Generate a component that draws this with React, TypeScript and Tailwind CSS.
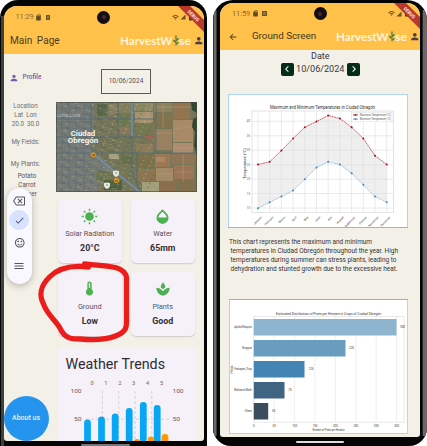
import React from "react";
import { MdPerson, MdSpa, MdDeviceThermostat, MdOutlineBackspace, MdCheck, MdMenu, MdArrowBack, MdChevronLeft, MdChevronRight, MdWifi, MdSignalCellular4Bar, MdSdCard, MdSentimentSatisfiedAlt, MdBatteryFull } from "react-icons/md";

type LabelProps = {
  x: number;
  y: number;
  s: number;
  w?: number;
  fill?: string;
  anchor?: "start" | "middle" | "end";
  bold?: boolean;
  children: string;
};

function Label({ x, y, s, w, fill = "#333", anchor = "start", bold, children }: LabelProps) {
  return (
    <text x={x} y={y} fontSize={s} fill={fill} textAnchor={anchor} fontWeight={bold ? 700 : 400} textLength={w} lengthAdjust="spacingAndGlyphs">
      {children}
    </text>
  );
}

function Brand() {
  return (
    <svg width="86" height="16" viewBox="0 0 86 16" className="shrink-0 font-['Lato',sans-serif]">
      <Label x={2} y={12} s={11.3} w={52.5} fill="#fff4dd" bold>HarvestW</Label>
      <Label x={61} y={12} s={11.3} w={12} fill="#fff4dd" bold>se</Label>
      <path d="M58 12.5V4.5" stroke="#397846" strokeWidth="1" />
      <path d="M57.9 9.4c-1.8 0-2.8-1-2.9-2.6 1.8 0 2.9.9 2.9 2.6ZM58.1 7.8c0-1.7.9-2.6 2.5-2.8 0 1.7-.8 2.8-2.5 2.8ZM58 5.4c-.9-1.2-.9-2.4 0-3.4.9 1 .9 2.2 0 3.4ZM58.1 11.4c0-1.5.9-2.4 2.4-2.5 0 1.6-.9 2.5-2.4 2.5Z" fill="#397846" />
      <MdPerson x={75.3} y={2.2} size={11} color="#45404a" />
    </svg>
  );
}

function SunIcon() {
  return (
    <svg width="17" height="17" viewBox="0 0 17 17" fill="none">
      <circle cx="8.5" cy="8.5" r="4.3" fill="currentColor" />
      <path d="M8.5 .8v2M8.5 14.2v2M.8 8.5h2M14.2 8.5h2M3 3l1.4 1.4M12.6 12.6 14 14M3 14l1.4-1.4M12.6 4.4 14 3" stroke="currentColor" strokeWidth="1.4" />
    </svg>
  );
}

function DropIcon() {
  return (
    <svg width="15" height="17" viewBox="0 0 15 17">
      <path d="M7.5 1.2 11.7 5.6a6 6 0 1 1-8.4 0Z" fill="currentColor" />
      <path d="M3.4 9.4C3.5 7.8 4.2 6.9 7.5 3.7c3.3 3.2 4 4.1 4.1 5.7Z" fill="#f6f1f8" />
    </svg>
  );
}

function StatusBar({ time, className }: { time: string; className: string }) {
  return (
    <div className={"flex items-center text-[#8b6a31] " + className}>
      <span className="text-[7.3px] leading-none">{time}</span>
      <MdSdCard size={7} className="ml-[1.5px] text-[#5f4a25]" />
      <span className="ml-[3.5px] h-[5px] w-[4.5px] border border-[#6d552b] bg-[#94743a]" />
      <span className="ml-[47px] flex h-[13px] w-[13px] shrink-0 items-center justify-center rounded-full bg-[#120e12]">
        <span className="h-[4px] w-[4px] rounded-full bg-[#4d2631]" />
      </span>
      <MdWifi size={7} className="ml-[61.5px] shrink-0 text-[#4f3e20]" />
      <MdSignalCellular4Bar size={6} className="ml-[1px] shrink-0 text-[#6c5223]" />
      <MdBatteryFull size={7} className="ml-[1px] shrink-0 text-[#3f3118]" />
    </div>
  );
}

function DebugRibbon() {
  return (
    <svg width="27" height="27" viewBox="0 0 27 27" className="absolute right-0 top-0">
      <path d="M1 0H13L27 14V26Z" fill="#b9372b" />
      <g transform="translate(16.5 9.8) rotate(45)">
        <Label x={0} y={1.7} s={4.8} w={14} fill="#f7e3dc" anchor="middle" bold>DEBUG</Label>
      </g>
    </svg>
  );
}

const fields = [
  [98, 0, 18, 10, "#8d8260"], [117, 0, 17, 17, "#927550"], [98, 11, 18, 15, "#80734f"], [117, 18, 20, 22, "#a98a68"],
  [99, 27, 17, 21, "#9b8060"], [117, 41, 20, 10, "#b08d70"], [78, 0, 19, 9, "#8b8964"], [79, 10, 18, 11, "#a79371"],
  [80, 22, 17, 9, "#757952"], [80, 42, 17, 9, "#8e7d59"], [80, 53, 18, 13, "#7c7049"], [99, 52, 15, 13, "#9b7854"],
  [115, 52, 24, 10, "#8f7656"], [82, 67, 17, 12, "#8c7653"], [100, 66, 17, 13, "#a38b68"], [118, 63, 20, 14, "#9b7658"],
  [86, 80, 17, 10, "#a2a07b"], [104, 80, 16, 10, "#8d6e4f"], [121, 78, 18, 12, "#81714c"],
  [63, 1, 14, 10, "#837e5e"], [64, 13, 10, 10, "#6d784e"], [53, 2, 8, 10, "#8d8266"], [41, 2, 10, 12, "#5c6a49"],
  [52, 14, 10, 8, "#777155"], [64, 25, 10, 7, "#8b795b"], [53, 52, 10, 5, "#a3a180"], [66, 54, 11, 8, "#657048"],
  [40, 69, 14, 10, "#6d7751"], [48, 78, 18, 10, "#526340"], [100, 55, 9, 5, "#ac8765"],
] as const;

function SatelliteMap() {
  const roofs = Array.from({ length: 680 }, (_, i) => {
    const x = (i * 37.17) % 62;
    const y = (i * 23.71) % 90;
    return <rect key={i} x={x} y={y} width={1.5} height={1} fill={["#bab9aa", "#4b544e", "#969785", "#677064"][i % 4]} opacity=".42" />;
  });
  const trees = Array.from({ length: 170 }, (_, i) => (
    <rect key={i} x={42 + ((i * 17.73) % 55)} y={(i * 31.37) % 90} width={1.6} height={1.2} fill={["#a9a889", "#465c3c", "#c4ba9c"][i % 3]} opacity=".5" />
  ));
  return (
    <svg width="141" height="90" viewBox="0 0 141 90" className="block shrink-0">
      <rect width="141" height="90" fill="#767658" />
      <path d="M0 0H38V51L56 65L40 90H0Z" fill="#777c75" />
      {fields.map(([x, y, w, h, c], i) => <rect key={i} x={x} y={y} width={w} height={h} fill={c} />)}
      <path d="M99 5H136M99 31H117M117 27L140 24M82 15H97M118 46H138M101 72H117M119 70H137M107 0V25M127 52V80M90 0V13" stroke="#bca17b" strokeWidth=".7" opacity=".7" />
      {roofs}
      {trees}
      <path d="M135 0h6v11l-5-3ZM137 17l4-2v38l-3-9 1-14-3-5Z" fill="#33482e" />
      <path d="M0 6H38M0 12H37M0 20H38M0 26H40M0 41H35M0 46H38M0 58H38M0 65H38M0 73H37M0 81H38M6 0V90M13 0V90M20 0V90M28 0V90M45 0V51" stroke="#526783" strokeWidth=".6" opacity=".8" />
      <path d="M0 17H100V0M0 35H88M0 51H140M76 0V70L84 90M100 17V51M35 0V42L37 53M81 50V83M62 0V36" fill="none" stroke="#536b78" strokeWidth=".9" />
      <path d="M37 52L84 90M76 0V34" stroke="#6f88a1" strokeWidth="2" />
      <path d="M37 52L84 90" stroke="#8798a2" strokeWidth=".6" />
      <path d="M90 35h7M93.5 31v8" stroke="#b55a50" strokeWidth="1.6" />
      <Label x={1} y={15} s={4.5} w={23} fill="#b6bac0">Loma Linda</Label>
      <Label x={27} y={33.5} s={6.6} w={24.5} fill="#f4f4f4" anchor="middle" bold>Ciudad</Label>
      <Label x={27} y={41} s={6.6} w={30.5} fill="#f4f4f4" anchor="middle" bold>Obregón</Label>
      <circle cx="37.3" cy="52.8" r="2.5" fill="#dc941f" /><path d="M36 53h3" stroke="#5b461d" />
      <circle cx="60.5" cy="78.5" r="2.5" fill="#e29b22" /><path d="M59 79h3" stroke="#5b461d" />
      <path d="M57 69q3-1 6 0v3q-1 3-3 3t-3-3ZM48 81q3-1 6 0v3q-1 3-3 3t-3-3Z" fill="#e5e6df" />
      <path d="M59 71h2M50 83h2" stroke="#8b8d88" />
      <path d="M0 .5H141M0 89.5H141M140.5 0V90M.5 0V90" stroke="#454e47" opacity=".65" />
    </svg>
  );
}

function Card({ icon, label, value }: { icon: React.ReactNode; label: string; value: string }) {
  return (
    <div className="flex h-[64px] w-[64.5px] flex-col items-center rounded-[5px] bg-[#f6f1f8] pt-[8px] shadow-[0_1px_1.5px_#cfc9cc]">
      <div className="flex h-[18px] items-center text-[#4caf50]">{icon}</div>
      <div className="mt-[4px] whitespace-nowrap text-[7.3px] leading-[10px] text-[#57525b]">{label}</div>
      <div className="mt-[3px] text-[8.8px] font-bold leading-[12px] text-[#333038]">{value}</div>
    </div>
  );
}

function WeatherTrends() {
  const blue = [[29.5, 71.5], [43.5, 68.5], [57.2, 65.5], [71.2, 60], [85.3, 54], [99.2, 57]];
  return (
    <svg width="138" height="94" viewBox="0 0 138 94" className="mt-[12px] block rounded-t-[5px] bg-[#f6f1f8]">
      <Label x={7.5} y={20.5} s={14} w={99.5} fill="#2f2c32">Weather Trends</Label>
      {["0", "1", "2", "3", "4", "5"].map((d, i) => <Label key={d} x={34 + i * 13.9} y={36.5} s={5.7} anchor="middle" fill="#69646d">{d}</Label>)}
      <Label x={12.5} y={45} s={6} w={11} fill="#625e66">100</Label>
      <Label x={114.5} y={45} s={6} w={11} fill="#625e66">100</Label>
      <path d="M44.4 43V94M60.8 43V94M77 43V94M93.8 43V94M28 71.2H111" stroke="#c9c7cd" strokeWidth=".8" strokeDasharray="3 2" />
      <Label x={16} y={73.2} s={6} w={7.5} fill="#625e66">50</Label>
      <Label x={114.5} y={73.2} s={6} w={7.5} fill="#625e66">50</Label>
      {blue.map(([x, y]) => <rect key={x} x={x - 3.4} y={y} width={6.8} height={40} rx={3.4} fill="#07a7f3" />)}
      {[[65, 93], [79, 91], [93, 88.5], [107, 86]].map(([x, y]) => <rect key={x} x={x - 3.4} y={y} width={6.8} height={20} rx={3.4} fill="#ff9803" />)}
    </svg>
  );
}

function MainPhone() {
  return (
    <div className="relative h-[446px] w-[206.5px] shrink-0 rounded-t-[18px] bg-[#050505] pl-[3.5px] pt-[6px]">
      <div className="absolute bottom-0 left-[1px] top-[16px] w-[2.5px] bg-[#3c433f]" />
      <div className="relative h-[435px] w-[200.5px] overflow-hidden rounded-b-[3px] rounded-t-[13px] bg-[#f3f0e8]">
        <header className="h-[47.5px] bg-[#ffc14a]">
          <StatusBar time="11:29" className="h-[22px] pl-[12px]" />
          <div className="flex h-[25px] items-center justify-between pl-[6.5px]">
            <h1 className="whitespace-nowrap text-[10.1px] text-[#4b3c22] [word-spacing:2px]">Main Page</h1>
            <Brand />
          </div>
          <DebugRibbon />
        </header>
        <div className="flex">
          <aside className="flex w-[52px] shrink-0 flex-col items-center text-[6.3px] leading-[9px] text-[#706c70]">
            <div className="mt-[19px] flex items-center gap-[4px] self-start pl-[5px] text-[6.5px] font-medium text-[#7959ae]"><MdPerson size={10} />Profile</div>
            <div className="mt-[19.5px] w-full whitespace-pre pr-[8px] text-center">{"Location\nLat  Lon\n20.0  30.0"}</div>
            <div className="mt-[9px] w-full pr-[8px] text-center">My Fields:</div>
            <div className="mt-[13px] w-full pr-[8px] text-center">My Plants:</div>
            <div className="mt-[3px] w-full whitespace-pre pr-[5px] text-center text-[#575357]">{"Potato\nCarrot\nPepper"}</div>
          </aside>
          <main className="w-[141px] shrink-0">
            <div className="ml-[45.5px] mt-[15.5px] flex h-[25px] w-[50px] items-center justify-center border border-[#5c5956] text-[6.5px] text-[#555155]">10/06/2024</div>
            <div className="mt-[8px]"><SatelliteMap /></div>
            <div className="ml-[2px] mt-[7px]">
              <div className="grid grid-cols-[64.5px_64.5px] gap-x-[8.5px] gap-y-[8.5px]">
                <Card icon={<SunIcon />} label="Solar Radiation" value="20°C" />
                <Card icon={<DropIcon />} label="Water" value="65mm" />
                <Card icon={<MdDeviceThermostat size={17} />} label="Ground" value="Low" />
                <Card icon={<MdSpa size={16} />} label="Plants" value="Good" />
              </div>
              <WeatherTrends />
            </div>
          </main>
        </div>
        <div className="absolute left-[3px] top-[182px] flex h-[96px] w-[25.5px] flex-col items-center rounded-full bg-[#f9f8fe] pt-[6px] text-[#55545d] shadow-[0_2px_7px_#b9b5ac]">
          <div className="flex h-[14px] items-center"><MdOutlineBackspace size={12} /></div>
          <div className="mt-[2px] flex h-[20px] w-[20px] items-center justify-center rounded-full bg-[#d8e1fd] text-[#485780]"><MdCheck size={11} /></div>
          <div className="mt-[5px] flex h-[16px] items-center"><MdSentimentSatisfiedAlt size={11.5} /></div>
          <div className="mt-[7px] flex h-[16px] items-center"><MdMenu size={12} /></div>
        </div>
        <div className="absolute left-0 top-[390px] flex h-[45px] w-[45px] items-center justify-center rounded-full bg-[#2494ef] text-[7px] font-medium text-[#e3f2ff]">About us</div>
        <svg width="200" height="435" viewBox="3.5 6 200 435" className="pointer-events-none absolute left-0 top-0">
          <path d="M88 267C72 265 58 268 49 277C40 286 38 294 43 304C47 316 57 321 61 331C65 338 70 339 80 339C92 340 105 340 115 336C128 331 126 326 126 314V278C125 266 108 266 84 264" fill="none" stroke="#ed1c1c" strokeWidth="5.3" strokeLinecap="round" strokeLinejoin="round" />
        </svg>
      </div>
      <div className="mx-auto mt-[3px] h-[2px] w-[49px] rounded-full bg-[#777]" />
    </div>
  );
}

const highs = [164, 161.3, 150, 138, 126.7, 121, 115, 118, 126.7, 138, 155.3, 164];
const lows = [207.7, 201.7, 196, 190, 178.7, 167, 161.3, 164, 172.7, 184.3, 196, 201.7];
const months = ["January", "February", "March", "April", "May", "June", "July", "August", "September", "October", "November", "December"];
const mx = (i: number) => 258 + i * 11.7;

function TemperatureChart() {
  const up = highs.map((y, i) => `${mx(i)},${y}`);
  const down = lows.map((y, i) => `${mx(i)},${y}`);
  return (
    <svg width="180" height="134" viewBox="228 93.5 180 134" className="block shrink-0 bg-white">
      <Label x={322.5} y={108.5} s={4.6} w={105} anchor="middle">Maximum and Minimum Temperatures in Ciudad Obregón</Label>
      <polygon points={[...up, ...down.slice().reverse()].join(" ")} fill="#efefef" />
      {[120.7, 135.3, 149.7, 164.3, 178.7, 193, 207.5].map((y, i) => (
        <g key={y}>
          <path d={`M252 ${y}H393.5`} stroke="#dedee0" strokeWidth=".6" />
          <Label x={250} y={y + 1} s={2.8} anchor="end" fill="#555">{String(40 - i * 5)}</Label>
        </g>
      ))}
      {months.map((m, i) => (
        <g key={m}>
          <path d={`M${mx(i)} 110.5V212`} stroke="#dedee0" strokeWidth=".6" />
          <g transform={`translate(${mx(i) + 4} 217) rotate(-45)`}><Label x={0} y={0} s={2.9} anchor="end">{m}</Label></g>
        </g>
      ))}
      <rect x="252" y="110.5" width="141.5" height="101.5" fill="none" stroke="#dcdcde" strokeWidth=".8" />
      <polyline points={up.join(" ")} fill="none" stroke="#b8575a" strokeWidth=".9" strokeDasharray="2 .6" />
      <polyline points={down.join(" ")} fill="none" stroke="#9cbfdc" strokeWidth=".9" strokeDasharray="2 .6" />
      {highs.map((y, i) => <circle key={i} cx={mx(i)} cy={y} r="1" fill="#a90d17" />)}
      {lows.map((y, i) => <circle key={i} cx={mx(i)} cy={y} r="1" fill="#4285bb" />)}
      <rect x="351.5" y="111.8" width="40.5" height="9.5" fill="#fff" stroke="#ddd" strokeWidth=".5" />
      <path d="M353 114.4h5" stroke="#a90d17" strokeWidth=".8" /><circle cx="355.5" cy="114.4" r=".9" fill="#a90d17" />
      <path d="M353 118.6h5" stroke="#4285bb" strokeWidth=".8" /><circle cx="355.5" cy="118.6" r=".9" fill="#4285bb" />
      <Label x={359.7} y={115.4} s={2.8} w={31} fill="#555">Maximum Temperature (°C)</Label>
      <Label x={359.7} y={119.6} s={2.8} w={31} fill="#555">Minimum Temperature (°C)</Label>
      <g transform="translate(245.5 163) rotate(-90)"><Label x={0} y={0} s={3.5} w={31} anchor="middle">Temperature (°C)</Label></g>
      <rect x="228.5" y="94" width="179" height="133" fill="none" stroke="#afd3f2" />
      <path d="M228 227.1H408" stroke="#7fb8e6" />
    </svg>
  );
}

const pests = [
  { name: "Aphids/Mosquito", y: 319, end: 396, value: "350", vx: 402, c: "#8fb4d0" },
  { name: "Ringspot", y: 340, end: 345, value: "225", vx: 351, c: "#699dc0" },
  { name: "Fleahoppers, Thrips", y: 361, end: 304, value: "125", vx: 310.5, c: "#4384b4" },
  { name: "Bollworm Moth", y: 382, end: 284, value: "75", vx: 289.5, c: "#406583" },
  { name: "Others", y: 403, end: 267.7, value: "35", vx: 273, c: "#3b4d5c" },
];

function PestChart() {
  return (
    <svg width="179" height="135" viewBox="228.5 299 179 135" className="block shrink-0 bg-white">
      <Label x={328} y={315} s={4} w={105} anchor="middle">Estimated Distribution of Pests per Hectare in Crops of Ciudad Obregón</Label>
      {Array.from({ length: 8 }, (_, i) => (
        <g key={i}>
          <path d={`M${253.3 + i * 20.4} 316.5V422`} stroke="#e9e9eb" strokeWidth=".7" />
          <Label x={253.3 + i * 20.4} y={426.5} s={2.8} anchor="middle">{String(i * 50)}</Label>
        </g>
      ))}
      <rect x="253.3" y="316.5" width="150.2" height="105.7" fill="none" stroke="#e4e4e6" strokeWidth=".8" />
      {pests.map((p) => (
        <g key={p.name}>
          <rect x="253.3" y={p.y} width={p.end - 253.3} height="16.5" fill={p.c} />
          <Label x={251.3} y={p.y + 8.8} s={2.8} anchor="end" w={p.name.length > 10 ? 17.5 : p.name === "Others" ? 7 : 9.5}>{p.name}</Label>
          <Label x={p.vx} y={p.y + 9} s={3} anchor="middle">{p.value}</Label>
        </g>
      ))}
      <g transform="translate(232 369.5) rotate(-90)"><Label x={0} y={0} s={2.6} w={8} anchor="middle">Pests</Label></g>
      <Label x={328} y={430.6} s={3.3} w={32} anchor="middle">Number of Pests per Hectare</Label>
      <rect x="229" y="299.5" width="178" height="134" fill="none" stroke="#b8d2f0" />
      <path d="M228.5 299.5H407.5" stroke="#82b4e6" />
    </svg>
  );
}

function GroundPhone() {
  const arrow = "flex h-[13px] w-[13px] items-center justify-center rounded-[2px] bg-[#052c19] text-white";
  return (
    <div className="relative h-[446px] w-[214px] shrink-0 overflow-hidden rounded-b-[18px] rounded-t-[20px] bg-[#050505] pl-[7px] pt-[3px]">
      <div className="absolute bottom-[10px] left-0 top-[10px] w-[4px] border-x border-[#3a3a3c] bg-[#69696b]" />
      <div className="absolute bottom-[10px] right-0 top-[10px] w-[5px] border-l border-[#242424] bg-[#68686a]" />
      <div className="relative h-[434px] w-[199.5px] overflow-hidden rounded-b-[3px] rounded-t-[13px] bg-[#f3f0e8]">
        <header className="h-[46.5px] bg-[#ffc14a]">
          <StatusBar time="11:59" className="h-[21px] pl-[12px]" />
          <div className="flex h-[25px] items-center pl-[7.5px]">
            <MdArrowBack size={10} className="text-[#493a20]" />
            <h1 className="ml-[14.5px] w-[82.5px] whitespace-nowrap text-[9.8px] text-[#463820]">Ground Screen</h1>
            <Brand />
          </div>
          <DebugRibbon />
        </header>
        <div className="flex h-[44px] flex-col items-center pl-[1px]">
          <div className="h-[13px] text-[9px] leading-[12px] text-[#38363a]">Date</div>
          <div className="flex items-center">
            <span className={arrow}><MdChevronLeft size={12} /></span>
            <span className="w-[53.5px] text-center text-[9.1px] leading-[13px] text-[#38363a]">10/06/2024</span>
            <span className={arrow}><MdChevronRight size={12} /></span>
          </div>
        </div>
        <div className="ml-[8px]"><TemperatureChart /></div>
        <svg width="190" height="72" viewBox="220 227.5 190 72" className="block">
          <Label x={229} y={243.8} s={6.6} w={143}>This chart represents the maximum and minimum</Label>
          <Label x={230.5} y={252.8} s={6.6} w={167.5}>temperatures in Ciudad Obregón throughout the year. High</Label>
          <Label x={230.5} y={261.8} s={6.6} w={166}>temperatures during summer can stress plants, leading to</Label>
          <Label x={230.5} y={270.8} s={6.6} w={167}>dehydration and stunted growth due to the excessive heat.</Label>
        </svg>
        <div className="-mt-[1px] ml-[8.5px]"><PestChart /></div>
      </div>
      <div className="ml-[75.5px] mt-[4px] h-[2px] w-[48px] rounded-full bg-[#ddd]" />
    </div>
  );
}

export default function App() {
  return (
    <div className="flex h-[446px] w-[427px] gap-[6.5px] overflow-hidden bg-white font-['Roboto',sans-serif]">
      <MainPhone />
      <GroundPhone />
    </div>
  );
}
